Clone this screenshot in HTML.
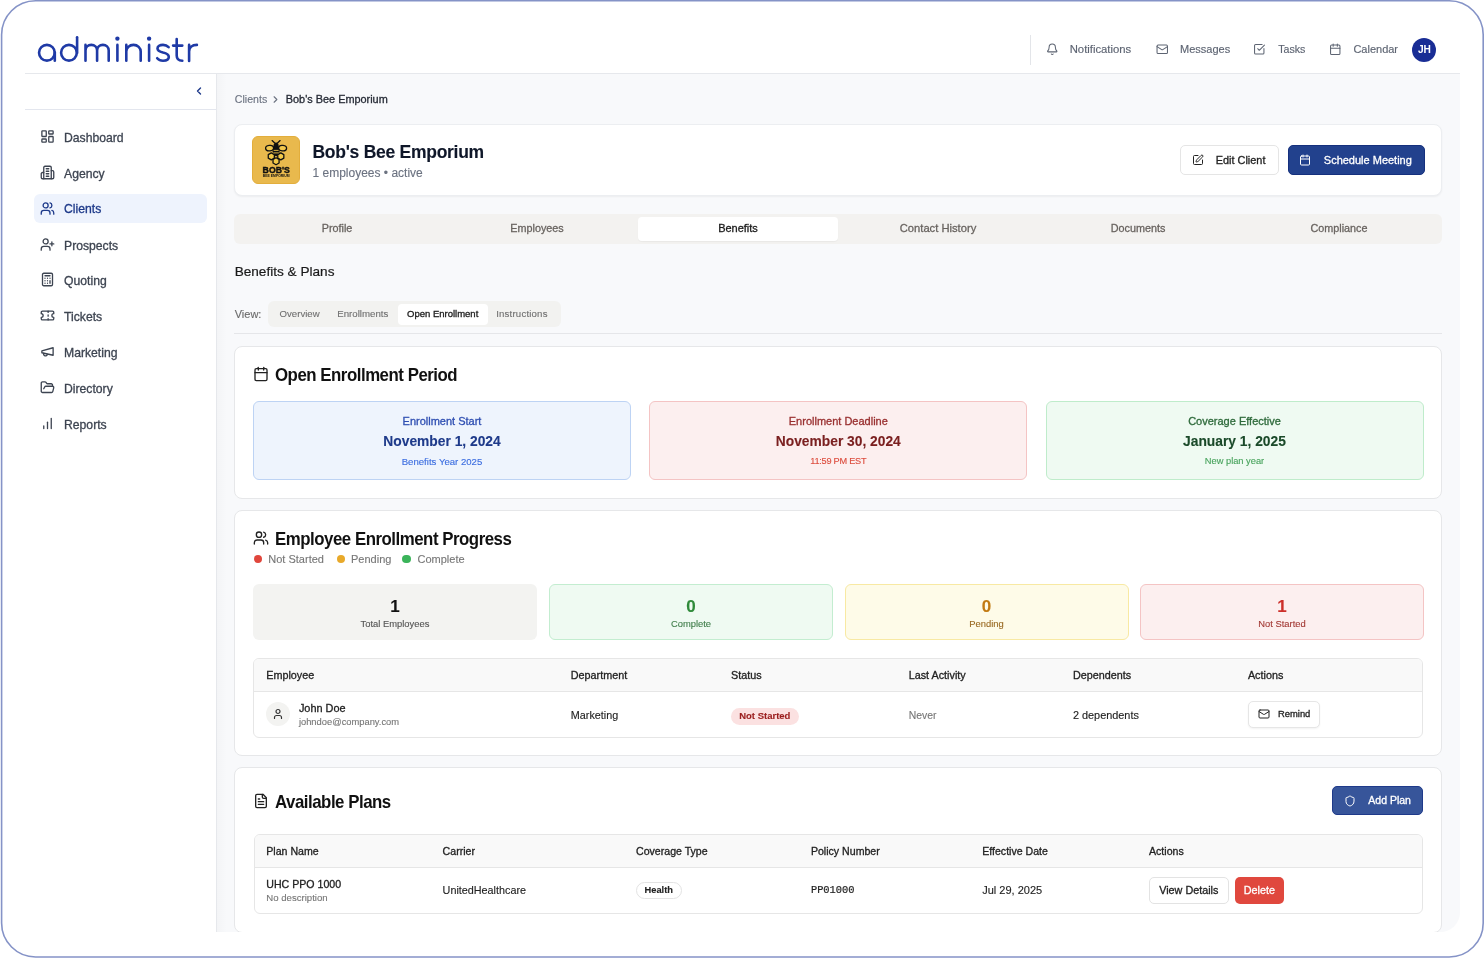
<!DOCTYPE html>
<html><head><meta charset="utf-8">
<style>
*{box-sizing:border-box;margin:0;padding:0}
html,body{width:1484px;height:958px;overflow:hidden;background:#fff;font-family:"Liberation Sans",sans-serif;color:#111}
.a{position:absolute}
.t{position:absolute;white-space:nowrap;line-height:1;-webkit-text-stroke:0.12px currentColor}
#frame{position:absolute;left:1px;top:0;width:1482px;height:957px;border:2px solid #7d8bc6;border-radius:36px;background:#fff}
#app{position:absolute;left:25px;top:26px;width:1435px;height:906px;border-radius:20px;overflow:hidden;background:#fff}
#pg{position:absolute;left:-25px;top:-26px;width:1484px;height:958px;will-change:transform}
svg.i{position:absolute;fill:none;stroke:currentColor;stroke-width:2;stroke-linecap:round;stroke-linejoin:round;overflow:visible}
.nav{position:absolute;left:34px;width:173px;height:29px;border-radius:6px;color:#3d4451}
.nav .t{left:30px;top:9px;font-size:12.2px;-webkit-text-stroke:0.3px currentColor}
.nav svg{left:6px;top:6.6px;width:15px;height:15px;stroke-width:2.1}
.nav.act{background:#eef3fd;color:#1e3a8a}
.hn{color:#5d6472}
.hn .t{font-size:11px;top:43.8px;-webkit-text-stroke:0.15px currentColor}
.hn svg{top:43.3px;width:12.5px;height:12.5px}
.card{position:absolute;left:234px;width:1208px;background:#fff;border:1px solid #e6e7e9;border-radius:8px}
.ttl{position:absolute;font-size:17.9px !important;font-weight:bold;letter-spacing:-0.5px;line-height:1;color:#111;white-space:nowrap;transform:scaleX(0.94);transform-origin:0 0}
.md{-webkit-text-stroke:0.3px currentColor}
.btn{position:absolute;border-radius:5px}
</style></head><body>
<svg class="a" style="left:0;top:0" width="1484" height="958"><rect x="1.6" y="0.8" width="1481.6" height="956.2" rx="34" fill="#fff" stroke="#8593c7" stroke-width="1.6"/></svg>
<div id="app"><div id="pg">
  <!-- header -->
  <div class="a" style="left:25px;top:73px;width:1435px;height:1px;background:#e6e8ec"></div>
  <svg class="a" style="left:0;top:0" width="220" height="74" viewBox="0 0 220 74" fill="none" stroke="#1f3aa6" stroke-width="2.6" stroke-linecap="round" stroke-linejoin="round">
    <circle cx="46.9" cy="52.75" r="7.85"/><path d="M54.8 52.5V60.7"/>
    <circle cx="68.95" cy="52.75" r="7.85"/><path d="M77.1 37.2V53"/>
    <path d="M85.5 44.9V60.8M85.5 50.5C85.5 47 88 44.9 91.3 44.9C94.6 44.9 97.1 47 97.1 50.5V60.8M97.1 50.5C97.1 47 99.6 44.9 102.9 44.9C106.2 44.9 108.7 47 108.7 50.5V60.8"/>
    <path d="M117.4 44.9V60.8"/><circle cx="117.4" cy="38.6" r="1.1" stroke-width="2.2"/>
    <path d="M126.3 44.9V60.8M126.3 51.6C126.3 47.8 129.3 44.9 133.5 44.9C137.7 44.9 140.7 47.8 140.7 51.6V60.8"/>
    <path d="M149.1 44.9V60.8"/><circle cx="149.1" cy="38.6" r="1.1" stroke-width="2.2"/>
    <path d="M168.6 47.2C167 45.5 165 44.9 163 44.9C159.8 44.9 157.5 46.5 157.5 48.5C157.5 50.8 160 51.8 163 52.5C166.5 53.2 168.8 54.5 168.8 57C168.8 59.2 166.5 60.7 163 60.7C160.5 60.7 158.5 59.8 157.2 58.2"/>
    <path d="M176.7 39V55.5C176.7 58.6 178.6 60.7 182.3 60.7M173.1 45.6H182.3"/>
    <path d="M189.1 44.9V60.9M189.1 51.5C189.1 47.5 192 44.9 196.9 44.9"/>
  </svg>
  <div class="a" style="left:1030px;top:35px;width:1px;height:30px;background:#e3e5e9"></div>
  <div class="hn">
    <svg class="i" style="left:1045.5px" viewBox="0 0 24 24"><path d="M10.268 21a2 2 0 0 0 3.464 0"/><path d="M3.262 15.326A1 1 0 0 0 4 17h16a1 1 0 0 0 .74-1.673C19.41 13.956 18 12.499 18 8A6 6 0 0 0 6 8c0 4.499-1.411 5.956-2.738 7.326"/></svg>
    <span class="t" style="left:1069.7px;font-size:11.3px">Notifications</span>
    <svg class="i" style="left:1155.5px" viewBox="0 0 24 24"><rect x="2" y="4" width="20" height="16" rx="2"/><path d="m22 7-8.97 5.7a1.94 1.94 0 0 1-2.06 0L2 7"/></svg>
    <span class="t" style="left:1180px">Messages</span>
    <svg class="i" style="left:1253px" viewBox="0 0 24 24"><path d="M21 10.5V19a2 2 0 0 1-2 2H5a2 2 0 0 1-2-2V5a2 2 0 0 1 2-2h12.5"/><path d="m9 11 3 3L22 4"/></svg>
    <span class="t" style="left:1278.3px;font-size:10.6px">Tasks</span>
    <svg class="i" style="left:1329px" viewBox="0 0 24 24"><path d="M8 2v4"/><path d="M16 2v4"/><rect width="18" height="18" x="3" y="4" rx="2"/><path d="M3 10h18"/></svg>
    <span class="t" style="left:1353.4px">Calendar</span>
  </div>
  <div class="a" style="left:1412.4px;top:37.8px;width:24px;height:24px;border-radius:50%;background:#192d95;color:#fff;font-size:10.2px;font-weight:bold;text-align:center;line-height:24px">JH</div>

  <!-- sidebar -->
  <div class="a" style="left:216px;top:74px;width:1px;height:858px;background:#e6e8ec"></div>
  <div class="a" style="left:25px;top:109px;width:191px;height:1px;background:#e3e6ee"></div>
  <svg class="i" style="left:192.5px;top:85px;width:12px;height:12px;color:#1e3a8a;stroke-width:2.8" viewBox="0 0 24 24"><path d="m15 18-6-6 6-6"/></svg>

  <div class="nav" style="top:122.5px"><svg class="i" viewBox="0 0 24 24"><rect width="7" height="9" x="3" y="3" rx="1"/><rect width="7" height="5" x="14" y="3" rx="1"/><rect width="7" height="9" x="14" y="12" rx="1"/><rect width="7" height="5" x="3" y="16" rx="1"/></svg><span class="t">Dashboard</span></div>
  <div class="nav" style="top:158.5px"><svg class="i" viewBox="0 0 24 24"><path d="M6 22V4a2 2 0 0 1 2-2h8a2 2 0 0 1 2 2v18Z"/><path d="M6 12H4a2 2 0 0 0-2 2v6a2 2 0 0 0 2 2h2"/><path d="M18 9h2a2 2 0 0 1 2 2v9a2 2 0 0 1-2 2h-2"/><path d="M10 6h4"/><path d="M10 10h4"/><path d="M10 14h4"/><path d="M10 18h4"/></svg><span class="t">Agency</span></div>
  <div class="nav act" style="top:194px"><svg class="i" viewBox="0 0 24 24"><path d="M16 21v-2a4 4 0 0 0-4-4H6a4 4 0 0 0-4 4v2"/><circle cx="9" cy="7" r="4"/><path d="M22 21v-2a4 4 0 0 0-3-3.87"/><path d="M16 3.13a4 4 0 0 1 0 7.75"/></svg><span class="t">Clients</span></div>
  <div class="nav" style="top:230.5px"><svg class="i" viewBox="0 0 24 24"><path d="M16 21v-2a4 4 0 0 0-4-4H6a4 4 0 0 0-4 4v2"/><circle cx="9" cy="7" r="4"/><line x1="19" x2="19" y1="8" y2="14"/><line x1="22" x2="16" y1="11" y2="11"/></svg><span class="t">Prospects</span></div>
  <div class="nav" style="top:265.8px"><svg class="i" viewBox="0 0 24 24"><rect width="16" height="20" x="4" y="2" rx="2"/><line x1="8" x2="16" y1="6" y2="6"/><line x1="16" x2="16" y1="14" y2="18"/><path d="M16 10h.01"/><path d="M12 10h.01"/><path d="M8 10h.01"/><path d="M12 14h.01"/><path d="M8 14h.01"/><path d="M12 18h.01"/><path d="M8 18h.01"/></svg><span class="t">Quoting</span></div>
  <div class="nav" style="top:301.5px"><svg class="i" viewBox="0 0 24 24"><path d="M2 9a3 3 0 0 1 0 6v2a2 2 0 0 0 2 2h16a2 2 0 0 0 2-2v-2a3 3 0 0 1 0-6V7a2 2 0 0 0-2-2H4a2 2 0 0 0-2 2Z"/><path d="M13 5v2"/><path d="M13 17v2"/><path d="M13 11v2"/></svg><span class="t">Tickets</span></div>
  <div class="nav" style="top:337.5px"><svg class="i" viewBox="0 0 24 24"><path d="m3 11 18-5v12L3 14v-3z"/><path d="M11.6 16.8a3 3 0 1 1-5.8-1.6"/></svg><span class="t">Marketing</span></div>
  <div class="nav" style="top:373.5px"><svg class="i" viewBox="0 0 24 24"><path d="m6 14 1.5-2.9A2 2 0 0 1 9.24 10H20a2 2 0 0 1 1.94 2.5l-1.54 6a2 2 0 0 1-1.95 1.5H4a2 2 0 0 1-2-2V5a2 2 0 0 1 2-2h3.9a2 2 0 0 1 1.69.9l.81 1.2a2 2 0 0 0 1.67.9H18a2 2 0 0 1 2 2v2"/></svg><span class="t">Directory</span></div>
  <div class="nav" style="top:409.5px"><svg class="i" viewBox="0 0 24 24"><path d="M6 20v-4"/><path d="M12 20V10"/><path d="M18 20V4"/></svg><span class="t">Reports</span></div>

  <!-- main -->
  <div class="a" style="left:217px;top:74px;width:1243px;height:858px;background:#f8f9fb"></div>
  <div class="a" style="left:217px;top:74px;width:10px;height:858px;background:linear-gradient(90deg,rgba(0,0,0,0.018),rgba(0,0,0,0))"></div>
  <!-- breadcrumb -->
  <span class="t" style="left:234.8px;top:93.7px;font-size:10.6px;color:#6b7280">Clients</span>
  <svg class="i" style="left:270px;top:93.5px;width:11px;height:11px;color:#6b7280;stroke-width:2.4" viewBox="0 0 24 24"><path d="m9 18 6-6-6-6"/></svg>
  <span class="t md" style="left:285.8px;top:93.7px;font-size:10.9px;color:#262b36">Bob's Bee Emporium</span>

  <!-- client card -->
  <div class="a" style="left:234px;top:124px;width:1208px;height:72px;background:#fff;border:1px solid #eceef1;border-radius:8px;box-shadow:0 1px 2px rgba(0,0,0,0.05)"></div>
  <div class="a" style="left:252px;top:136px;width:48px;height:48px;border-radius:6px;background:#e9b94d;border:1px solid #e3ae3c"></div>
  <svg class="a" style="left:252px;top:136px" width="48" height="48" viewBox="0 0 48 48">
    <g fill="#f3c948" stroke="#111" stroke-width="1.3" stroke-linejoin="round">
      <path d="M19.30 16.90 L22.33 18.65 L22.33 22.15 L19.30 23.90 L16.27 22.15 L16.27 18.65Z"/><path d="M28.80 16.90 L31.83 18.65 L31.83 22.15 L28.80 23.90 L25.77 22.15 L25.77 18.65Z"/><path d="M24.05 21.70 L27.08 23.45 L27.08 26.95 L24.05 28.70 L21.02 26.95 L21.02 23.45Z"/>
    </g>
    <g fill="#f0c64c" stroke="#111" stroke-width="1.3" stroke-linecap="round">
      <ellipse cx="17.6" cy="12.1" rx="4.0" ry="2.75" transform="rotate(-8 17.6 12.1)"/>
      <ellipse cx="30.6" cy="12.1" rx="4.0" ry="2.75" transform="rotate(8 30.6 12.1)"/>
      <path d="M22.7 6.9L20.1 4.6M25.5 6.9L28.1 4.6" fill="none"/>
    </g>
    <path d="M21.5 10c0-2.1 1.1-3.4 2.6-3.4s2.6 1.3 2.6 3.4v3h-5.2z" fill="#111"/>
    <path d="M20.9 13c0 0 1.2-.4 3.2-.4s3.2.4 3.2.4l.3 2.6c-.1 2-1.6 3.9-3.5 4.9-1.9-1-3.4-2.9-3.5-4.9z" fill="#111"/>
    <path d="M21.6 14.4h5M21.3 16.9h5.6" stroke="#f0c64c" stroke-width="0.9"/>
    <text x="10.6" y="36.6" font-family="Liberation Sans" font-weight="bold" font-size="9.8" textLength="27.2" lengthAdjust="spacingAndGlyphs" fill="#111" stroke="#111" stroke-width="0.45">BOB'S</text>
    <text x="10.8" y="41" font-family="Liberation Sans" font-weight="bold" font-size="3.6" textLength="26.8" lengthAdjust="spacingAndGlyphs" fill="#111">BEE EMPORIUM</text>
  </svg>
  <span class="t" style="left:312.5px;top:143.5px;font-size:17.5px;font-weight:bold;color:#0f1729;letter-spacing:-0.27px">Bob's Bee Emporium</span>
  <span class="t" style="left:312.5px;top:166.5px;font-size:12px;color:#6b7280">1 employees • active</span>
  <div class="btn" style="left:1179.5px;top:145px;width:99px;height:29.5px;background:#fff;border:1px solid #e5e5e5"></div>
  <svg class="i" style="left:1192.3px;top:153.8px;width:12px;height:12px;color:#222" viewBox="0 0 24 24"><path d="M12 3H5a2 2 0 0 0-2 2v14a2 2 0 0 0 2 2h14a2 2 0 0 0 2-2v-7"/><path d="M18.375 2.625a1 1 0 0 1 3 3l-9.013 9.014a2 2 0 0 1-.853.505l-2.873.84a.5.5 0 0 1-.62-.62l.84-2.873a2 2 0 0 1 .506-.852z"/></svg>
  <span class="t md" style="left:1215.8px;top:154.5px;font-size:10.9px;color:#222">Edit Client</span>
  <div class="btn" style="left:1287.5px;top:145px;width:137px;height:29.5px;background:#22418d;border:1px solid #15307d"></div>
  <svg class="i" style="left:1299px;top:153.8px;width:12px;height:12px;color:#fff" viewBox="0 0 24 24"><path d="M8 2v4"/><path d="M16 2v4"/><rect width="18" height="18" x="3" y="4" rx="2"/><path d="M3 10h18"/></svg>
  <span class="t md" style="left:1323.8px;top:154.5px;font-size:11px;color:#fff">Schedule Meeting</span>

  <!-- tabs -->
  <div class="a" style="left:234px;top:214px;width:1208px;height:30px;background:#f3f2f0;border-radius:6px"></div>
  <div class="a" style="left:638px;top:217px;width:200px;height:24px;background:#fff;border-radius:4px;box-shadow:0 1px 1px rgba(0,0,0,0.04)"></div>
  <span class="t" style="left:237px;width:200px;text-align:center;top:223.2px;font-size:10.8px;color:#68635f;-webkit-text-stroke:0.28px #68635f">Profile</span>
  <span class="t" style="left:437px;width:200px;text-align:center;top:223.2px;font-size:10.8px;color:#68635f;-webkit-text-stroke:0.28px #68635f">Employees</span>
  <span class="t md" style="left:638px;width:200px;text-align:center;top:223.2px;font-size:11px;color:#1a1a1a">Benefits</span>
  <span class="t" style="left:838px;width:200px;text-align:center;top:223.2px;font-size:11.2px;color:#68635f;-webkit-text-stroke:0.28px #68635f">Contact History</span>
  <span class="t" style="left:1038px;width:200px;text-align:center;top:223.2px;font-size:10.8px;color:#68635f;-webkit-text-stroke:0.28px #68635f">Documents</span>
  <span class="t" style="left:1239px;width:200px;text-align:center;top:223.2px;font-size:10.8px;color:#68635f;-webkit-text-stroke:0.28px #68635f">Compliance</span>

  <span class="t" style="left:234.7px;top:265px;font-size:13.6px;color:#1a1a1a;-webkit-text-stroke:0.2px #1a1a1a">Benefits &amp; Plans</span>
  <span class="t" style="left:234.7px;top:308.5px;font-size:11px;color:#6b6b6b">View:</span>
  <div class="a" style="left:267.5px;top:301px;width:293px;height:26px;background:#f2f2f0;border-radius:6px"></div>
  <div class="a" style="left:398px;top:304px;width:89.5px;height:20.5px;background:#fff;border-radius:4px"></div>
  <span class="t" style="left:279.6px;top:309.3px;font-size:9.6px;color:#707070">Overview</span>
  <span class="t" style="left:337.3px;top:309.3px;font-size:9.66px;color:#707070">Enrollments</span>
  <span class="t md" style="left:407px;top:309.3px;font-size:9.5px;color:#1a1a1a">Open Enrollment</span>
  <span class="t" style="left:496.2px;top:309.3px;font-size:9.6px;letter-spacing:0.2px;color:#707070">Instructions</span>
  <div class="a" style="left:234px;top:333.3px;width:1208px;height:1.2px;background:#e5e6e9"></div>

  <!-- card 1: open enrollment period -->
  <div class="card" style="top:346px;height:153px"></div>
  <svg class="i" style="left:252.5px;top:365.7px;width:16px;height:16px;color:#222" viewBox="0 0 24 24"><path d="M8 2v4"/><path d="M16 2v4"/><rect width="18" height="18" x="3" y="4" rx="2"/><path d="M3 10h18"/></svg>
  <span class="ttl" style="left:274.5px;top:366.9px">Open Enrollment Period</span>
  <div class="a" style="left:253px;top:401px;width:378px;height:78.5px;background:#eef4fd;border:1px solid #bdd3f4;border-radius:6px"></div>
  <div class="a" style="left:649.3px;top:401px;width:378px;height:78.5px;background:#fcefef;border:1px solid #f4c4c4;border-radius:6px"></div>
  <div class="a" style="left:1045.5px;top:401px;width:378px;height:78.5px;background:#effaf2;border:1px solid #bfeccb;border-radius:6px"></div>
  <span class="t md" style="left:253px;width:378px;text-align:center;top:415.5px;font-size:11px;color:#2f4fb2">Enrollment Start</span>
  <span class="t" style="left:253px;width:378px;text-align:center;top:435.1px;font-size:13.8px;font-weight:bold;color:#1e3a8a">November 1, 2024</span>
  <span class="t" style="left:253px;width:378px;text-align:center;top:456.7px;font-size:9.6px;color:#3b6de0">Benefits Year 2025</span>
  <span class="t md" style="left:649.3px;width:378px;text-align:center;top:415.5px;font-size:11px;color:#992f2f">Enrollment Deadline</span>
  <span class="t" style="left:649.3px;width:378px;text-align:center;top:435.1px;font-size:13.8px;font-weight:bold;color:#7a1f1f">November 30, 2024</span>
  <span class="t" style="left:649.3px;width:378px;text-align:center;top:456.9px;font-size:9.2px;letter-spacing:-0.25px;color:#dc4b3c">11:59 PM EST</span>
  <span class="t md" style="left:1045.5px;width:378px;text-align:center;top:415.5px;font-size:11px;color:#2e6a3b">Coverage Effective</span>
  <span class="t" style="left:1045.5px;width:378px;text-align:center;top:435.1px;font-size:13.8px;font-weight:bold;color:#1b4a2a">January 1, 2025</span>
  <span class="t" style="left:1045.5px;width:378px;text-align:center;top:456.9px;font-size:9.3px;color:#47a35c">New plan year</span>

  <!-- card 2: employee enrollment progress -->
  <div class="card" style="top:510px;height:245.5px"></div>
  <svg class="i" style="left:252.8px;top:530.4px;width:16px;height:16px;color:#222" viewBox="0 0 24 24"><path d="M16 21v-2a4 4 0 0 0-4-4H6a4 4 0 0 0-4 4v2"/><circle cx="9" cy="7" r="4"/><path d="M22 21v-2a4 4 0 0 0-3-3.87"/><path d="M16 3.13a4 4 0 0 1 0 7.75"/></svg>
  <span class="ttl" style="left:274.8px;top:530.8px">Employee Enrollment Progress</span>
  <div class="a" style="left:253.5px;top:554.5px;width:8.5px;height:8.5px;border-radius:50%;background:#e0463c"></div>
  <span class="t" style="left:268.3px;top:554px;font-size:11px;color:#777">Not Started</span>
  <div class="a" style="left:336.5px;top:554.5px;width:8.5px;height:8.5px;border-radius:50%;background:#e8a92a"></div>
  <span class="t" style="left:351px;top:554px;font-size:11px;color:#777">Pending</span>
  <div class="a" style="left:402px;top:554.5px;width:8.5px;height:8.5px;border-radius:50%;background:#3bb45a"></div>
  <span class="t" style="left:417.5px;top:554px;font-size:11px;color:#777">Complete</span>

  <div class="a" style="left:253px;top:584.3px;width:284px;height:55.7px;background:#f3f3f1;border-radius:6px"></div>
  <div class="a" style="left:549px;top:584.3px;width:284px;height:55.7px;background:#effaf2;border:1px solid #c3edd0;border-radius:6px"></div>
  <div class="a" style="left:844.5px;top:584.3px;width:284px;height:55.7px;background:#fefbe8;border:1px solid #f8e9a3;border-radius:6px"></div>
  <div class="a" style="left:1140px;top:584.3px;width:284px;height:55.7px;background:#fcefef;border:1px solid #f4c4c4;border-radius:6px"></div>
  <span class="t" style="left:253px;width:284px;text-align:center;top:597.5px;font-size:17px;font-weight:bold;color:#111">1</span>
  <span class="t" style="left:253px;width:284px;text-align:center;top:619px;font-size:9.4px;color:#555">Total Employees</span>
  <span class="t" style="left:549px;width:284px;text-align:center;top:597.5px;font-size:17px;font-weight:bold;color:#2f8a3a">0</span>
  <span class="t" style="left:549px;width:284px;text-align:center;top:619px;font-size:9.4px;color:#3f7d4a">Complete</span>
  <span class="t" style="left:844.5px;width:284px;text-align:center;top:597.5px;font-size:17px;font-weight:bold;color:#c27a12">0</span>
  <span class="t" style="left:844.5px;width:284px;text-align:center;top:619px;font-size:9.4px;color:#9a6a22">Pending</span>
  <span class="t" style="left:1140px;width:284px;text-align:center;top:597.5px;font-size:17px;font-weight:bold;color:#cc2f2a">1</span>
  <span class="t" style="left:1140px;width:284px;text-align:center;top:619px;font-size:9.4px;color:#a33a36">Not Started</span>

  <!-- employee table -->
  <div class="a" style="left:253px;top:658px;width:1170px;height:79.5px;background:#fff;border:1px solid #e6e6e6;border-radius:6px;overflow:hidden">
    <div class="a" style="left:0;top:0;width:1170px;height:33px;background:#f9f9f9;border-bottom:1px solid #e6e6e6"></div>
  </div>
  <span class="t md" style="left:266.2px;top:669.8px;font-size:10.8px;color:#222">Employee</span>
  <span class="t md" style="left:570.8px;top:669.8px;font-size:10.8px;color:#222">Department</span>
  <span class="t md" style="left:731px;top:669.8px;font-size:10.8px;color:#222">Status</span>
  <span class="t md" style="left:908.7px;top:669.8px;font-size:10.8px;color:#222">Last Activity</span>
  <span class="t md" style="left:1072.9px;top:669.8px;font-size:10.8px;color:#222">Dependents</span>
  <span class="t md" style="left:1247.9px;top:669.8px;font-size:10.8px;color:#222">Actions</span>
  <div class="a" style="left:266px;top:702px;width:24px;height:24px;border-radius:50%;background:#f3f3f1"></div>
  <svg class="i" style="left:272px;top:708px;width:12px;height:12px;color:#333;stroke-width:2.4" viewBox="0 0 24 24"><path d="M19 21v-2a4 4 0 0 0-4-4H9a4 4 0 0 0-4 4v2"/><circle cx="12" cy="7" r="4"/></svg>
  <span class="t md" style="left:298.9px;top:702.6px;font-size:10.9px;color:#222">John Doe</span>
  <span class="t" style="left:298.9px;top:717.7px;font-size:9.36px;color:#777">johndoe@company.com</span>
  <span class="t" style="left:570.8px;top:709.8px;font-size:10.8px;color:#222">Marketing</span>
  <div class="a" style="left:730.8px;top:707.5px;width:68px;height:17px;border-radius:9px;background:#fbe1e1"></div>
  <span class="t" style="left:730.8px;width:68px;text-align:center;top:711.2px;font-size:9.5px;font-weight:bold;color:#9b1f1f">Not Started</span>
  <span class="t" style="left:908.7px;top:711px;font-size:10.4px;color:#777">Never</span>
  <span class="t" style="left:1072.9px;top:709.8px;font-size:10.9px;color:#222">2 dependents</span>
  <div class="btn" style="left:1248px;top:700.5px;width:72px;height:27.3px;background:#fff;border:1px solid #e6e6e6;box-shadow:0 1px 2px rgba(0,0,0,0.05)"></div>
  <svg class="i" style="left:1257.5px;top:707.6px;width:12px;height:12px;color:#222" viewBox="0 0 24 24"><rect x="2" y="4" width="20" height="16" rx="2"/><path d="m22 7-8.97 5.7a1.94 1.94 0 0 1-2.06 0L2 7"/></svg>
  <span class="t md" style="left:1278px;top:708.6px;font-size:9.4px;color:#222">Remind</span>
  <!-- card 3: available plans -->
  <div class="card" style="top:767px;height:166px"></div>
  <svg class="i" style="left:252.5px;top:792.6px;width:16px;height:16px;color:#222" viewBox="0 0 24 24"><path d="M15 2H6a2 2 0 0 0-2 2v16a2 2 0 0 0 2 2h12a2 2 0 0 0 2-2V7Z"/><path d="M14 2v4a2 2 0 0 0 2 2h4"/><path d="M10 9H8"/><path d="M16 13H8"/><path d="M16 17H8"/></svg>
  <span class="ttl" style="left:275.1px;top:793.5px">Available Plans</span>
  <div class="btn" style="left:1331.8px;top:786px;width:91.4px;height:29.4px;background:#37559a;border:1px solid #1f3a8a"></div>
  <svg class="i" style="left:1343.5px;top:794.8px;width:12px;height:12px;color:#fff" viewBox="0 0 24 24"><path d="M20 13c0 5-3.5 7.5-7.66 8.95a1 1 0 0 1-.67-.01C7.5 20.5 4 18 4 13V6a1 1 0 0 1 1-1c2 0 4.5-1.2 6.24-2.72a1.17 1.17 0 0 1 1.52 0C14.51 3.81 17 5 19 5a1 1 0 0 1 1 1z"/></svg>
  <span class="t md" style="left:1368.3px;top:795.2px;font-size:10.5px;color:#fff">Add Plan</span>

  <div class="a" style="left:253.5px;top:833.5px;width:1169.5px;height:80px;background:#fff;border:1px solid #e6e6e6;border-radius:6px;overflow:hidden">
    <div class="a" style="left:0;top:0;width:1170px;height:33.5px;background:#f9f9f9;border-bottom:1px solid #e6e6e6"></div>
  </div>
  <span class="t md" style="left:266.3px;top:845.9px;font-size:10.6px;color:#222">Plan Name</span>
  <span class="t md" style="left:442.6px;top:845.9px;font-size:10.6px;color:#222">Carrier</span>
  <span class="t md" style="left:636px;top:845.9px;font-size:10.6px;color:#222">Coverage Type</span>
  <span class="t md" style="left:810.9px;top:845.9px;font-size:10.6px;color:#222">Policy Number</span>
  <span class="t md" style="left:982.2px;top:845.9px;font-size:10.6px;color:#222">Effective Date</span>
  <span class="t md" style="left:1149px;top:845.9px;font-size:10.6px;color:#222">Actions</span>
  <span class="t md" style="left:266.3px;top:878.7px;font-size:10.6px;color:#222">UHC PPO 1000</span>
  <span class="t" style="left:266.3px;top:892.8px;font-size:9.6px;color:#777">No description</span>
  <span class="t" style="left:442.6px;top:885.1px;font-size:10.8px;color:#222">UnitedHealthcare</span>
  <div class="a" style="left:636px;top:882px;width:45.5px;height:16.5px;border-radius:9px;background:#fff;border:1px solid #e3e3e3"></div>
  <span class="t" style="left:636px;width:45.5px;text-align:center;top:886px;font-size:9.3px;font-weight:bold;color:#222">Health</span>
  <span class="t" style="left:810.9px;top:885px;font-size:10.4px;font-family:'Liberation Mono',monospace;color:#222;-webkit-text-stroke:0.2px #222">PP01000</span>
  <span class="t" style="left:982.2px;top:885.1px;font-size:11px;color:#222">Jul 29, 2025</span>
  <div class="btn" style="left:1149.4px;top:877.2px;width:79.6px;height:27.2px;background:#fff;border:1px solid #e3e3e3"></div>
  <span class="t md" style="left:1159.2px;top:885.2px;font-size:10.8px;color:#222">View Details</span>
  <div class="btn" style="left:1235.3px;top:877.2px;width:48.5px;height:27.2px;background:#e0483e"></div>
  <span class="t md" style="left:1243.7px;top:885.2px;font-size:10.8px;color:#fff">Delete</span>

  <!--MAIN-->
</div></div>
</body></html>
